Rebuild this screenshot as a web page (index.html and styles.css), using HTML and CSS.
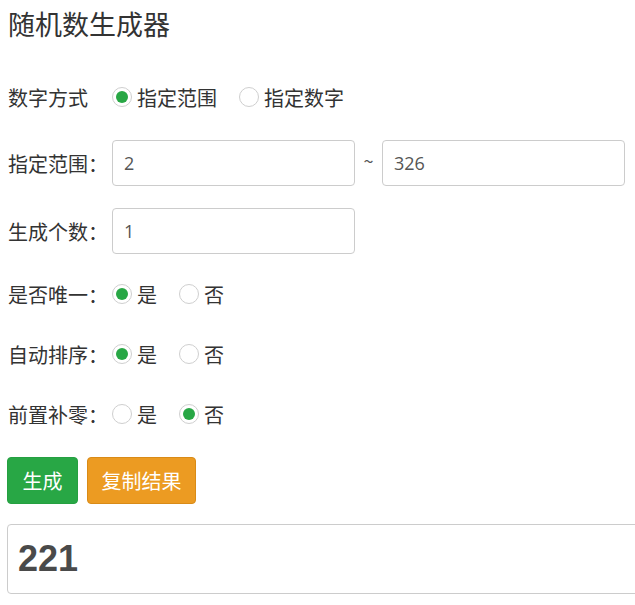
FILE: index.html
```html
<!DOCTYPE html>
<html lang="zh-CN">
<head>
<meta charset="utf-8">
<title>随机数生成器</title>
<link rel="stylesheet" href="styles.css">
</head>
<body>
<div class="page">
  <h1 class="title">随机数生成器</h1>

  <div class="row row-mode">
    <span class="label">数字方式</span>
    <label class="opt"><span class="radio checked"></span><span>指定范围</span></label>
    <label class="opt"><span class="radio"></span><span>指定数字</span></label>
  </div>

  <div class="row row-input row-range">
    <span class="label">指定范围：</span>
    <div class="input">2</div>
    <span class="tilde">~</span>
    <div class="input">326</div>
  </div>

  <div class="row row-input row-count">
    <span class="label">生成个数：</span>
    <div class="input">1</div>
  </div>

  <div class="row row-radio">
    <span class="label">是否唯一：</span>
    <label class="opt"><span class="radio checked"></span><span>是</span></label>
    <label class="opt"><span class="radio"></span><span>否</span></label>
  </div>

  <div class="row row-radio">
    <span class="label">自动排序：</span>
    <label class="opt"><span class="radio checked"></span><span>是</span></label>
    <label class="opt"><span class="radio"></span><span>否</span></label>
  </div>

  <div class="row row-radio row-last">
    <span class="label">前置补零：</span>
    <label class="opt"><span class="radio"></span><span>是</span></label>
    <label class="opt"><span class="radio checked"></span><span>否</span></label>
  </div>

  <div class="buttons">
    <button class="btn btn-green">生成</button>
    <button class="btn btn-orange">复制结果</button>
  </div>

  <div class="result">221</div>
</div>
</body>
</html>
```

FILE: styles.css
```css
html, body {
  margin: 0;
  padding: 0;
  overflow: hidden;
  background: #fff;
}
body {
  font-family: "Noto Sans CJK SC", "Noto Sans", sans-serif;
  color: #333;
  font-size: 20px;
}
.page {
  padding: 8px 0 0 7px;
}
.title {
  margin: 0 0 37px 1px;
  font-size: 27px;
  font-weight: normal;
  line-height: 32px;
  color: #333;
}
.row {
  display: flex;
  align-items: center;
  height: 40px;
  margin-bottom: 20px;
}
.row-mode {
  margin-bottom: 23px;
}
.row-input {
  height: 46px;
}
.row-range {
  margin-bottom: 22px;
}
.row-last {
  margin-bottom: 23px;
}
.label {
  width: 104px;
  padding-left: 1px;
  white-space: nowrap;
  flex: none;
}
.opt {
  display: flex;
  align-items: center;
  margin-right: 22px;
  white-space: nowrap;
}
.radio {
  width: 20px;
  height: 20px;
  box-sizing: border-box;
  border: 1px solid #cfcfcf;
  border-radius: 50%;
  margin-right: 5px;
  display: flex;
  align-items: center;
  justify-content: center;
  background: #fff;
}
.radio.checked::after {
  content: "";
  width: 12px;
  height: 12px;
  border-radius: 50%;
  background: #28a745;
}
.input {
  box-sizing: border-box;
  width: 243px;
  height: 46px;
  border: 1px solid #ccc;
  border-radius: 4px;
  padding: 0 11px;
  display: flex;
  align-items: center;
  font-family: "Open Sans", "Noto Sans", sans-serif;
  font-size: 18px;
  color: #555;
}
.tilde {
  width: 27px;
  text-align: center;
  font-size: 18px;
  color: #555;
  margin-top: -6px;
}
.buttons {
  display: flex;
  gap: 9px;
  margin-bottom: 20px;
}
.btn {
  height: 47px;
  box-sizing: border-box;
  border-radius: 4px;
  font-family: "Noto Sans CJK SC", sans-serif;
  font-size: 20px;
  color: #fff;
  padding: 0 13.5px;
  border: 1px solid transparent;
  line-height: 1;
  white-space: nowrap;
}
.btn-green {
  background: #28a745;
  border-color: #25a041;
  padding: 0 14.5px;
}
.btn-orange {
  background: #ec9b22;
  border-color: #d98b17;
}
.result {
  box-sizing: border-box;
  width: calc(100% + 20px);
  height: 70px;
  border: 1px solid #ccc;
  border-radius: 4px;
  padding: 0 10px;
  display: flex;
  align-items: center;
  font-family: "Liberation Sans", Arial, sans-serif;
  font-weight: bold;
  font-size: 36px;
  color: #4a4a4a;
}
```
